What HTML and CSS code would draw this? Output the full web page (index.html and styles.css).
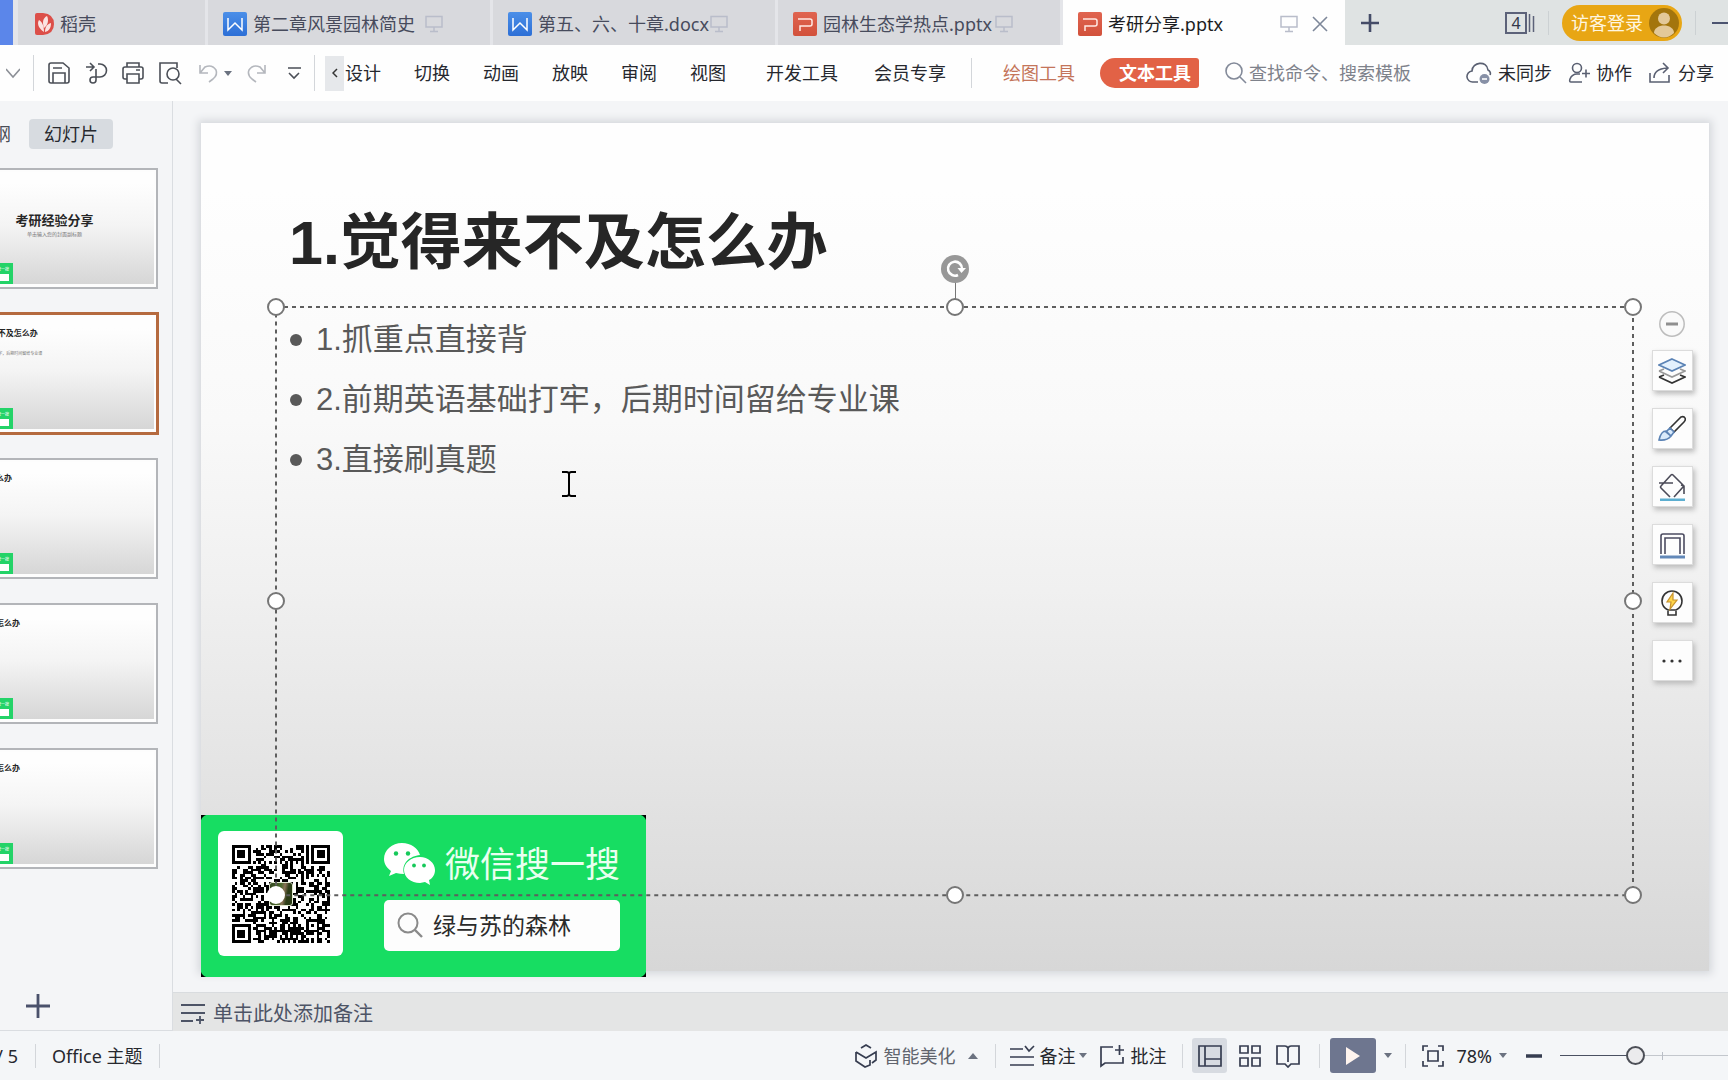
FILE: index.html
```html
<!DOCTYPE html>
<html lang="zh-CN">
<head>
<meta charset="utf-8">
<title>考研分享.pptx</title>
<link rel="stylesheet" href="styles.css">
</head>
<body>
<svg class="defs" aria-hidden="true">
  <defs>
    <linearGradient id="gw" x1="0" y1="0" x2="0" y2="1"><stop offset="0" stop-color="#4b8fe8"/><stop offset="1" stop-color="#2d6fd6"/></linearGradient>
    <linearGradient id="gp" x1="0" y1="0" x2="0" y2="1"><stop offset="0" stop-color="#e06450"/><stop offset="1" stop-color="#d2513b"/></linearGradient>
    <symbol id="doc-w" viewBox="0 0 24 24"><rect width="24" height="24" rx="2" fill="url(#gw)"/><path d="M5 6v12l7-7 7 7V6" fill="none" stroke="#fff" stroke-width="1.500"/></symbol>
    <symbol id="doc-p" viewBox="0 0 24 24"><rect width="24" height="24" rx="2" fill="url(#gp)"/><path d="M5 7h12q2 0 2 2v3q0 2-2 2H7v5" fill="none" stroke="#ffe9e4" stroke-width="1.500"/></symbol>
    <symbol id="monitor" viewBox="0 0 18 18"><path d="M1 1.500h16v10.500H1zM9 12v4M5 16.500h8" fill="none" stroke="currentColor" stroke-width="1.500"/></symbol>
  </defs>
</svg>

<header class="tabbar">
  <div class="app-edge"></div>
  <nav class="tabs" aria-label="文档标签">
    <button class="tab tab-home">
      <svg width="19" height="22" viewBox="0 0 19 22"><path d="M0 2q0-2 2-2h6q11 1 11 11T8 22H2q-2 0-2-2z" fill="#dc4f49"/><path d="M9 19C3 15 2 10 4 7c3 2 5 5 5 12zM9 15C7 9 8 5 12 3c2 4 1 9-3 12zM10 19c0-5 2-8 6-9 0 5-2 8-6 9z" fill="#fbe4e2"/></svg>
      <span>稻壳</span>
    </button>
    <button class="tab"><svg width="24" height="24"><use href="#doc-w"/></svg><span class="tab-label">第二章风景园林简史</span><svg class="mon" width="18" height="18"><use href="#monitor"/></svg></button>
    <button class="tab"><svg width="24" height="24"><use href="#doc-w"/></svg><span class="tab-label">第五、六、十章.docx</span><svg class="mon" width="18" height="18"><use href="#monitor"/></svg></button>
    <button class="tab"><svg width="24" height="24"><use href="#doc-p"/></svg><span class="tab-label">园林生态学热点.pptx</span><svg class="mon" width="18" height="18"><use href="#monitor"/></svg></button>
    <button class="tab tab-active"><svg width="24" height="24"><use href="#doc-p"/></svg><span class="tab-label">考研分享.pptx</span><svg class="mon" width="18" height="18"><use href="#monitor"/></svg><svg class="close" width="16" height="18" viewBox="0 0 16 18"><path d="M1 2l14 14M15 2L1 16" stroke="#7d8799" stroke-width="1.600"/></svg></button>
  </nav>
  <button class="bare" aria-label="新建标签"><svg width="18" height="18" viewBox="0 0 18 18"><path d="M9 0v18M0 9h18" stroke="#454c68" stroke-width="2.600"/></svg></button>
  <div class="account">
    <button class="bare windows" aria-label="窗口列表"><span class="win-count">4</span><svg width="8" height="22" viewBox="0 0 8 22"><path d="M2.500 2v18M6.500 4v16" stroke="#5c6279" stroke-width="1.500"/></svg></button>
    <i class="rule"></i>
    <button class="login">访客登录<svg width="30" height="30" viewBox="0 0 30 30"><circle cx="15" cy="15" r="15" fill="#a3750d"/><circle cx="15" cy="10.500" r="6" fill="#e3c898"/><path d="M5 25c0-10 20-10 20 0q-10 9-20 0z" fill="#e3c898"/></svg></button>
    <i class="rule"></i>
    <button class="bare minimise" aria-label="最小化"><svg width="16" height="16" viewBox="0 0 16 16"><path d="M0 8h16" stroke="#4c5470" stroke-width="2"/></svg></button>
  </div>
</header>

<div class="toolbar">
  <button class="bare file-more" aria-label="文件菜单"><svg width="14" height="24" viewBox="0 0 14 24"><path d="M0 8l7 8 7-8" fill="none" stroke="#8b8f96" stroke-width="1.500"/></svg></button>
  <i class="rule"></i>
  <div class="quick">
    <button class="bare" aria-label="保存"><svg width="24" height="24" viewBox="0 0 24 24"><path d="M4 2h12l6 5v13q0 2-2 2H4q-2 0-2-2V4q0-2 2-2zM6 7h9M6 22V12h12v10"/></svg></button>
    <button class="bare" aria-label="输出"><svg width="24" height="24" viewBox="0 0 24 24"><path d="M2 6h8M6 2l4 4-4 4M14 3h2a6 6 0 0 1 0 13H9a3 3 0 1 0 3 3V8"/></svg></button>
    <button class="bare" aria-label="打印"><svg width="24" height="24" viewBox="0 0 24 24"><path d="M6 6V2h12v4M6 18H4q-2 0-2-2V8q0-2 2-2h16q2 0 2 2v8q0 2-2 2h-2M6 13h12v9H6zM15 9h4"/></svg></button>
    <button class="bare" aria-label="打印预览"><svg width="24" height="24" viewBox="0 0 24 24"><path d="M10 22H4q-2 0-2-2V2h17v5M18 18l5 5"/><circle cx="15" cy="13" r="6"/></svg></button>
    <button class="bare faded undo" aria-label="撤销"><svg width="24" height="24" viewBox="0 0 24 24"><path d="M3 4v8h8M3 12l5-6q7-3 11 3 2 5-3 9l-4 3"/></svg></button>
    <svg class="caret" width="8" height="5" viewBox="0 0 8 5"><path d="M0 0h8L4 5z"/></svg>
    <button class="bare faded" aria-label="恢复"><svg width="24" height="24" viewBox="0 0 24 24"><path d="M20 4v8h-8M20 12l-5-6q-7-3-11 3-2 5 3 9l4 3"/></svg></button>
    <button class="bare" aria-label="自定义"><svg width="24" height="24" viewBox="0 0 24 24"><path d="M6 7h13M7 12l5 5 5-5"/></svg></button>
  </div>
  <i class="rule"></i>
  <button class="scroll-left" aria-label="向左滚动"><svg width="6" height="10" viewBox="0 0 6 10"><path d="M5 1L1 5l4 4" fill="none" stroke="#333" stroke-width="1.500"/></svg></button>
  <nav class="menu" aria-label="功能区">
    <button>设计</button><button>切换</button><button>动画</button><button>放映</button><button>审阅</button><button>视图</button>
    <button class="wide">开发工具</button><button class="member">会员专享</button>
    <i class="rule"></i>
    <button class="draw-tool">绘图工具</button>
    <button class="text-tool">文本工具</button>
  </nav>
  <label class="search">
    <svg width="22" height="24" viewBox="0 0 22 24"><circle cx="9" cy="10" r="8" fill="none" stroke="#838a99" stroke-width="1.600"/><path d="M15 16l6 6" stroke="#838a99" stroke-width="1.600"/></svg>
    <input type="text" placeholder="查找命令、搜索模板" aria-label="查找命令、搜索模板">
  </label>
  <div class="share">
    <button><svg width="26" height="24" viewBox="0 0 26 24"><path d="M12 21H7a5.500 5.500 0 0 1-1-11c0-9 15-11 16-1 2 1 3 3 2 5"/><circle cx="18.500" cy="18" r="5" fill="#8790a6" stroke="none"/><path d="M16 18h5" stroke="#fff"/></svg>未同步</button>
    <button><svg width="22" height="24" viewBox="0 0 22 24"><path d="M14 21H3q-2 0-1-3 2-5 7-5h3M14 12.500h8M18 8.500v8"/><circle cx="9" cy="7" r="4.500"/></svg>协作</button>
    <button><svg width="24" height="24" viewBox="0 0 24 24"><path d="M2 12v9h19v-7M6 17q0-9 13-10M15 2l5 5-5 5"/></svg>分享</button>
  </div>
</div>

<main class="main">
  <aside class="sidebar">
    <div class="side-tabs"><button class="outline-tab">大纲</button><button class="slides-tab">幻灯片</button></div>
    <div class="thumbs">
      <button class="thumb"><span class="mini cover"><b>考研经验分享</b><small>单击输入您的封面副标题</small><span class="mini-card"><em>微信搜一搜</em><i></i></span></span></button>
      <button class="thumb selected"><span class="mini"><b>1.觉得来不及怎么办</b><small>2.前期英语基础打牢，后期时间留给专业课</small><span class="mini-card"><em>微信搜一搜</em><i></i></span></span></button>
      <button class="thumb"><span class="mini short"><b>怎么办</b><span class="mini-card"><em>微信搜一搜</em><i></i></span></span></button>
      <button class="thumb"><span class="mini long"><b>怎么办</b><span class="mini-card"><em>微信搜一搜</em><i></i></span></span></button>
      <button class="thumb"><span class="mini long"><b>怎么办</b><span class="mini-card"><em>微信搜一搜</em><i></i></span></span></button>
    </div>
    <button class="bare add-slide" aria-label="新建幻灯片"><svg width="24" height="24" viewBox="0 0 24 24"><path d="M12 0v24M0 12h24" stroke="#4a516b" stroke-width="2.800"/></svg></button>
  </aside>

  <section class="workspace">
    <div class="stage">
      <article class="slide">
        <h1>1.觉得来不及怎么办</h1>
        <div class="textbox">
          <ul>
            <li>1.抓重点直接背</li>
            <li>2.前期英语基础打牢，后期时间留给专业课</li>
            <li>3.直接刷真题</li>
          </ul>
        </div>
        <div class="wechat-card">
          <div class="qr"><svg id="qr" viewBox="0 0 37 37" width="98" height="98" shape-rendering="crispEdges"></svg><span class="qr-photo"></span></div>
          <div class="card-body">
            <div class="brand">
              <svg width="52" height="44" viewBox="0 0 52 44"><path d="M18 0C8 0 0 7 0 16c0 5 3 9 7 12l-2 5 7-3q4 1 8 1C17 20 26 13 36 12 34 5 27 0 18 0z" fill="#fff"/><path d="M36 14c-9 0-16 6-16 13s7 13 16 13l5-1 5 3-1-5c4-2 6-6 6-10 0-7-7-13-15-13z" fill="#fff"/><g fill="#16c95a"><circle cx="12" cy="10.500" r="2.200"/><circle cx="24" cy="10.500" r="2.200"/><circle cx="30" cy="22.500" r="1.900"/><circle cx="40" cy="22.500" r="1.900"/></g></svg>
              <span>微信搜一搜</span>
            </div>
            <div class="card-search">
              <svg width="26" height="26" viewBox="0 0 26 26"><circle cx="11" cy="11" r="9.500" fill="none" stroke="#8a8a8a" stroke-width="2"/><path d="M18 18l7 7" stroke="#8a8a8a" stroke-width="2.400"/></svg>
              <span>绿与苏的森林</span>
            </div>
          </div>
        </div>
        <div class="selection">
          <svg class="frame" width="100%" height="100%"><rect x="0" y="0" width="100%" height="100%"/></svg>
          <span class="stem"></span>
          <span class="rotate"><svg width="28" height="28" viewBox="0 0 28 28"><circle cx="14" cy="14" r="14" fill="#989898"/><path d="M17 20a7 7 0 1 1 4-6" fill="none" stroke="#fff" stroke-width="2.600"/><path d="M16.500 13h8.500l-4.500 5z" fill="#fff"/></svg></span>
          <i class="h l t"></i><i class="h c t"></i><i class="h r t"></i>
          <i class="h l m"></i><i class="h r m"></i>
          <i class="h l b"></i><i class="h c b"></i><i class="h r b"></i>
        </div>
        <svg class="cursor" width="16" height="26" viewBox="0 0 16 26"><path d="M1 1h5l2 1 2-1h5M8 2v22M1 25h5l2-1 2 1h5" fill="none" stroke="#000" stroke-width="2"/></svg>
        <div class="float-tools">
          <button class="fold" aria-label="收起"><svg width="26" height="26" viewBox="0 0 26 26"><circle cx="13" cy="13" r="12.200" fill="#fafafa" stroke="#bdbdbd" stroke-width="1.500"/><path d="M7 13h12" stroke="#8f8f8f" stroke-width="3"/></svg></button>
          <button aria-label="图层"><svg width="28" height="28" viewBox="0 0 28 28"><path d="M1 20l13 6 13-6-5-2M1 20l5-2" stroke="#333"/><path d="M1 14l13 6 13-6-5-2M1 14l5-2" stroke="#999"/><path d="M14 2l13 6-13 6L1 8z" fill="#e4f1fd" stroke="#5b83b5"/></svg></button>
          <button aria-label="样式"><svg width="28" height="28" viewBox="0 0 28 28"><path d="M12 13l11-11q3-1 4 1 1 2-1 4L16 17z" stroke="#333"/><path d="M12 13l4 4-3 4-5-4zM8 16q-5 0-7 9 8 1 12-4z" fill="#d9eafb" stroke="#5b83b5"/></svg></button>
          <button aria-label="填充"><svg width="28" height="28" viewBox="0 0 28 28"><path d="M12 24L3 15q-1-1 0-2L13 2q1-1 2 0l10 10q1 1 0 2l-9 10M1 10h14M23 12l3 1v8" stroke="#4b4b58"/><path d="M2 27h25" stroke="#5caed0" stroke-width="3"/></svg></button>
          <button aria-label="轮廓"><svg width="28" height="28" viewBox="0 0 28 28"><path d="M3 23V5q0-2 2-2h19q2 0 2 2v18M7 23V7h15v16" stroke="#4b4b60"/><path d="M2 26h25" stroke="#6288b8" stroke-width="3"/></svg></button>
          <button aria-label="智能"><svg width="28" height="28" viewBox="0 0 28 28"><path d="M10 21q-6-3-6-9a10 10 0 0 1 20 0q0 6-6 9zM10 22v4h8v-4" stroke="#333"/><path d="M15 4l-6 9h4l-1 7 7-9h-4z" fill="#ffd54a" stroke="#c8932d" stroke-width="1.200"/></svg></button>
          <button aria-label="更多"><svg width="28" height="28" viewBox="0 0 28 28"><g fill="#333"><circle cx="6" cy="14" r="1.600"/><circle cx="14" cy="14" r="1.600"/><circle cx="22" cy="14" r="1.600"/></g></svg></button>
        </div>
      </article>
    </div>
    <button class="notes"><svg width="24" height="20" viewBox="0 0 24 20"><path d="M0 1h24M0 9h24M0 17h12M15 16h8M19 12v8" fill="none" stroke="#4d5466" stroke-width="1.800"/></svg>单击此处添加备注</button>
  </section>
</main>

<footer class="status">
  <div class="page-no"><span>2 / 5</span></div>
  <i class="rule"></i>
  <span class="theme">Office 主题</span>
  <i class="rule"></i>
  <div class="status-tools">
    <button class="beautify"><svg width="22" height="24" viewBox="0 0 22 24"><path d="M6 4l5-3 5 3M1 8v9l9 6 5-2v-5M1 8l10 6 10-6v8l-4 3"/></svg>智能美化<svg class="caret up" width="10" height="6" viewBox="0 0 10 6"><path d="M0 6h10L5 0z"/></svg></button>
    <i class="rule"></i>
    <button class="note-btn"><svg width="25" height="22" viewBox="0 0 25 22"><path d="M0 4h13M0 12h24M0 20h24M15 1l4 5 5-5"/></svg>备注<svg class="caret" width="8" height="5" viewBox="0 0 8 5"><path d="M0 0h8L4 5z"/></svg></button>
    <button class="comment-btn"><svg width="24" height="24" viewBox="0 0 24 24"><path d="M13 3H1v19l4-3h18v-6M15 6h9M19.500 1v10"/></svg>批注</button>
    <i class="rule"></i>
    <button class="view on" aria-label="普通视图"><svg width="24" height="24" viewBox="0 0 24 24"><path d="M1 2h22v20H1zM7 2v20M7 15h16"/></svg></button>
    <button class="view" aria-label="幻灯片浏览"><svg width="24" height="24" viewBox="0 0 24 24"><path d="M2 2h8v7H2zM14 2h8v7h-8zM2 14h8v8H2zM14 14h8v8h-8z"/></svg></button>
    <button class="view" aria-label="阅读视图"><svg width="24" height="24" viewBox="0 0 24 24"><path d="M12 4q-1-2-3-2H1v18h8l3 3 3-3h8V2h-8q-2 0-3 2zM12 4v14"/></svg></button>
    <i class="rule"></i>
    <button class="play" aria-label="放映"><svg width="14" height="20" viewBox="0 0 14 20"><path d="M0 1l14 9-14 9z" fill="#fff4ee" stroke="none"/></svg></button>
    <svg class="caret" width="8" height="5" viewBox="0 0 8 5"><path d="M0 0h8L4 5z"/></svg>
    <i class="rule"></i>
    <button class="fit" aria-label="适应窗口"><svg width="22" height="22" viewBox="0 0 22 22"><path d="M1 6V1h5M16 1h5v5M21 16v5h-5M6 21H1v-5M6 6h10v10H6z"/></svg></button>
    <button class="zoom-value">78%<svg class="caret" width="8" height="5" viewBox="0 0 8 5"><path d="M0 0h8L4 5z"/></svg></button>
    <button class="zoom-out" aria-label="缩小"><svg width="16" height="16" viewBox="0 0 16 16"><path d="M0 8h16" stroke-width="3.500"/></svg></button>
    <input class="zoom" type="range" min="0" max="1000" value="446" aria-label="缩放">
  </div>
</footer>
<script src="script.js"></script>
</body>
</html>
```

FILE: script.js
```js
// Draws the code modules: three finders, one alignment mark, timing rows and data cells.
(function () {
  var N = 37, d = '', seed = 20231;
  function rnd() { seed = (seed * 1103515245 + 12345) % 2147483648; return seed / 2147483648; }
  function ring(x, y, cx, cy) { return Math.max(Math.abs(x - cx), Math.abs(y - cy)); }
  for (var y = 0; y < N; y++) {
    for (var x = 0; x < N; x++) {
      var on = rnd() > 0.48;
      if (x === 6 || y === 6) on = (x + y) % 2 === 0;
      if (ring(x, y, 30, 30) <= 2) on = ring(x, y, 30, 30) !== 1;
      [[3, 3], [33, 3], [3, 33]].forEach(function (f) {
        var r = ring(x, y, f[0], f[1]);
        if (r <= 4) on = r === 3 || r <= 1;
      });
      if (on) d += 'M' + x + ' ' + y + 'h1v1h-1z';
    }
  }
  var p = document.createElementNS('http://www.w3.org/2000/svg', 'path');
  p.setAttribute('d', d);
  document.getElementById('qr').appendChild(p);
})();
```

FILE: styles.css
```css
* { box-sizing: border-box; }
body {
  margin: 0;
  min-height: 100vh;
  display: flex;
  flex-direction: column;
  overflow: hidden;
  font: 18px/24px "Noto Sans", "Noto Sans CJK SC", sans-serif;
  color: #26282e;
  background: #f4f5f7;
}
button {
  display: flex;
  align-items: center;
  padding: 0;
  border: 0;
  background: none;
  font: inherit;
  color: inherit;
  white-space: nowrap;
}
svg { display: block; flex: none; }
.defs { position: absolute; width: 0; height: 0; }
.rule { flex: none; width: 1px; height: 24px; background: #d3d6da; }
.caret { fill: #6b7280; stroke: none; }

/* document tabs */
.tabbar { display: flex; align-items: center; height: 45px; background: #dfe3e3; }
.app-edge { flex: none; width: 13px; height: 45px; background: #5b86ea; }
.tabs { display: flex; gap: 3px; padding-left: 5px; margin-right: 16px; background: #e4e5e9; }
.tab { width: 282px; height: 45px; padding: 2px 0 0 15px; background: #d8d9dd; color: #474b5c; }
.tab-home { width: 187px; padding-left: 17px; gap: 6px; }
.tab-label { width: 172px; margin-left: 6px; text-align: left; }
.tab-active { background: #fefefe; color: #1c1d22; }
.mon { color: #b9bdca; }
.close { margin-left: 14px; }
.account { display: flex; align-items: center; margin-left: auto; }
.win-count { width: 22px; height: 22px; border: 2px solid #5c6279; font-size: 16px; line-height: 18px; color: #33384a; text-align: center; }
.account .rule { margin: 0 13px; background: #ccd1d3; }
.login { height: 36px; padding: 0 3px 0 9px; gap: 6px; border-radius: 18px; background: #e8a614; color: #fff6e0; }
.minimise { margin-left: 3px; }

/* ribbon */
.toolbar { display: flex; align-items: center; height: 56px; padding: 0 14px 0 6px; background: #fefefe; }
.file-more { margin-right: 13px; }
.toolbar .rule { height: 36px; }
.quick { display: flex; align-items: center; gap: 13px; margin: 0 8px 0 13px; fill: none; stroke: #4b4f57; stroke-width: 1.600; }
.quick .caret { margin: 0 0 0 -10px; }
.quick .undo { margin-left: 2px; }
.quick .faded { stroke: #b4b7bd; }
.scroll-left { width: 19px; height: 35px; margin-left: 10px; justify-content: center; background: #e6e8eb; }
.menu { display: flex; align-items: center; gap: 33px; margin-left: 1px; }
.menu .wide { margin-left: 7px; }
.menu .member { margin-left: 3px; }
.menu .rule { height: 30px; margin-left: -8px; }
.menu .draw-tool { margin-left: -2px; color: #c4755a; }
.menu .text-tool { height: 30px; margin-left: -8px; padding: 0 8px 0 19px; border-radius: 15px 3px 3px 15px; background: #e26246; color: #fff; font-weight: 700; }
.search { display: flex; align-items: center; gap: 2px; margin-left: 26px; }
.search input { width: 190px; padding: 0; border: 0; background: none; font: inherit; color: #333; }
.search input::placeholder { color: #7e828b; opacity: 1; }
.share { display: flex; gap: 16px; margin-left: auto; fill: none; stroke: #5a6072; stroke-width: 1.600; }
.share button { gap: 6px; }

/* slide list */
.main { display: flex; flex: 1; }
.sidebar { display: flex; flex-direction: column; flex: none; width: 173px; padding-top: 18px; overflow: hidden; border-right: 1px solid #dadde1; border-bottom: 1px solid #dadde1; }
.side-tabs { display: flex; justify-content: flex-end; gap: 18px; padding-right: 59px; color: #4a4e58; }
.slides-tab { flex: none; width: 84px; height: 30px; justify-content: center; border-radius: 4px; background: #d7dbe0; color: #26282e; }
.outline-tab { flex: none; }
.thumbs { display: flex; flex-direction: column; align-items: flex-end; gap: 24px; padding: 19px 14px 0 0; }
.thumb { width: 208px; height: 121px; padding: 2px 2px 3px 3px; border: 2px solid #b3b5b9; background: #fdfdfd; }
.thumb.selected { border-color: #b56a3f; box-shadow: 0 0 0 1px #b56a3f; }
.mini { position: relative; display: flex; flex-direction: column; align-items: flex-start; width: 199px; height: 112px; padding: 10px 0 0 12px; background: linear-gradient(#fefefe 10%, #f4f4f4 48%, #d6d6d6); }
.mini b { font-size: 8px; line-height: 12px; color: #262626; }
.mini small { margin-top: 12px; font-size: 4px; line-height: 6px; color: #777; }
.mini.cover { align-items: center; padding: 39px 0 0; }
.mini.cover b { font-size: 13px; line-height: 18px; }
.mini.cover small { margin-top: 2px; font-size: 5px; }
.mini.short { padding-left: 33px; }
.mini.long { padding-left: 41px; }
.mini-card { position: absolute; left: 0; bottom: 0; display: flex; flex-direction: column; align-items: flex-end; gap: 1px; width: 58px; height: 21px; padding: 4px 4px 0 0; background: #24d368; color: #fff; font-size: 4px; line-height: 6px; }
.mini-card em { font-style: normal; }
.mini-card i { width: 31px; height: 7px; background: #fff; }
.add-slide { margin: auto 0 12px 26px; }

/* slide */
.workspace { display: flex; flex-direction: column; flex: 1; min-width: 0; }
.stage { flex: 1; padding: 22px 19px 0 28px; background: #f4f5f7; }
.slide { position: relative; display: flex; flex-direction: column; aspect-ratio: 16 / 9; background: linear-gradient(#fefefe 8%, #f9f9f9 35%, #f0f0f0 55%, #d7d7d7); box-shadow: 0 0 8px 3px #d5d8dc; }
.slide h1 { margin: 76px 0 0 88px; font: 700 61px/88px "Liberation Sans", "Noto Sans CJK SC", sans-serif; color: #262626; }
.textbox { margin: 23px 76px 0 75px; }
.textbox ul { margin: 0; padding: 0 0 0 14px; list-style: none; font: 31px/60px "Liberation Sans", "Noto Sans CJK SC", sans-serif; color: #595959; }
.textbox li { display: flex; align-items: center; gap: 14px; }
.textbox li::before { content: ""; width: 12px; height: 12px; border-radius: 50%; background: #595959; }

/* selection frame floats over the slide */
.selection { position: absolute; left: 75px; right: 76px; top: 184px; bottom: 76px; }
.frame { position: absolute; overflow: visible; }
.frame rect { fill: none; stroke: #5e5e5e; stroke-width: 2; stroke-dasharray: 4 4; }
.h { position: absolute; width: 18px; height: 18px; margin: -9px; border: 2px solid #767676; border-radius: 50%; background: #fff; }
.h.l { left: 0; }
.h.c { left: 50%; }
.h.r { left: 100%; }
.h.t { top: 0; }
.h.m { top: 50%; }
.h.b { top: 100%; }
.h.l.b { border-color: #fff; }
.stem { position: absolute; left: 50%; top: -25px; width: 1px; height: 18px; background: #767676; }
.rotate { position: absolute; left: 50%; top: -52px; margin-left: -14px; }
.cursor { position: absolute; left: 360px; top: 348px; }
.float-tools { position: absolute; top: 188px; right: 16px; display: flex; flex-direction: column; align-items: center; gap: 17px; fill: none; stroke-width: 1.600; }
.float-tools button { width: 41px; height: 41px; padding-right: 1px; justify-content: center; border: 1px solid #dcdcdc; background: #fdfdfd; box-shadow: 2px 3px 5px #bcbcbc; }
.float-tools .fold { width: 26px; height: 26px; margin-bottom: -4px; border: 0; background: none; box-shadow: none; }

/* search card pinned to the slide corner */
.wechat-card { position: absolute; left: 0; bottom: -6px; display: flex; gap: 41px; width: 445px; height: 162px; padding: 16px 0 0 17px; background: radial-gradient(circle at 8px 8px, #17dd62 8px, #000 9px) 0 0 / 8px 8px no-repeat, radial-gradient(circle at 0 8px, #17dd62 8px, #000 9px) 100% 0 / 8px 8px no-repeat, radial-gradient(circle at 8px 0, #17dd62 8px, #000 9px) 0 100% / 8px 8px no-repeat, radial-gradient(circle at 0 0, #17dd62 8px, #000 9px) 100% 100% / 8px 8px no-repeat, #17dd62; }
.qr { position: relative; display: flex; align-items: center; justify-content: center; width: 125px; height: 125px; border-radius: 6px; background: #fff; }
.qr-photo { position: absolute; width: 24px; height: 24px; border: 1px solid #dfe8cf; border-radius: 3px; background: linear-gradient(100deg, #33461f, #4b6a2c 45%, #8b7358 60%, #2c3d17 75%); }
.brand { display: flex; align-items: center; gap: 9px; height: 66px; color: #e9fff0; font-size: 35px; line-height: 48px; }
.brand svg { margin-top: 1px; }
.card-search { display: flex; align-items: center; gap: 10px; width: 236px; height: 51px; margin-top: 3px; padding: 0 0 2px 13px; border-radius: 5px; background: #fdfdfd; font-size: 23px; line-height: 32px; color: #2b2b2b; }

.notes { height: 39px; padding: 4px 0 0 8px; gap: 8px; border-top: 1px solid #d9dcdf; background: #e4e5e5; font-size: 20px; color: #4d5466; }

/* status bar */
.status { display: flex; align-items: center; height: 49px; background: #f4f6f8; overflow: hidden; }
.page-no { display: flex; justify-content: flex-end; width: 18px; margin-right: 17px; white-space: nowrap; }
.theme { margin: 0 16px; }
.status-tools { display: flex; align-items: center; margin-left: auto; fill: none; stroke: #363d50; stroke-width: 1.700; }
.beautify { gap: 6px; margin-right: 17px; color: #60646d; }
.beautify .up { margin-left: 7px; }
.note-btn { gap: 4px; margin: 0 13px 0 14px; }
.comment-btn { gap: 6px; margin-right: 16px; }
.view { width: 35px; height: 35px; justify-content: center; border-radius: 3px; }
.view.on { margin: 0 5px 0 9px; background: #d7dbe1; }
.view + .view:not(.on) + .view { margin: 0 14px 0 3px; }
.play { width: 46px; height: 35px; margin: 0 8px 0 10px; justify-content: center; border-radius: 3px; background: #6e768f; }
.play + .caret { margin-right: 13px; }
.fit { margin: 0 12px 0 16px; }
.zoom-value { gap: 7px; margin-right: 19px; }
.zoom-out { margin-right: 18px; }
.zoom { appearance: none; width: 168px; height: 20px; margin: 0; background: linear-gradient(#b9bec6, #b9bec6) 102px 50% / 1px 8px no-repeat, linear-gradient(90deg, #4a5162 76px, #c3c7cd 76px) 0 50% / 100% 1px no-repeat; }
.zoom::-webkit-slider-thumb { appearance: none; width: 19px; height: 19px; border: 2px solid #4c4f57; border-radius: 50%; background: #ebebed; }
```
